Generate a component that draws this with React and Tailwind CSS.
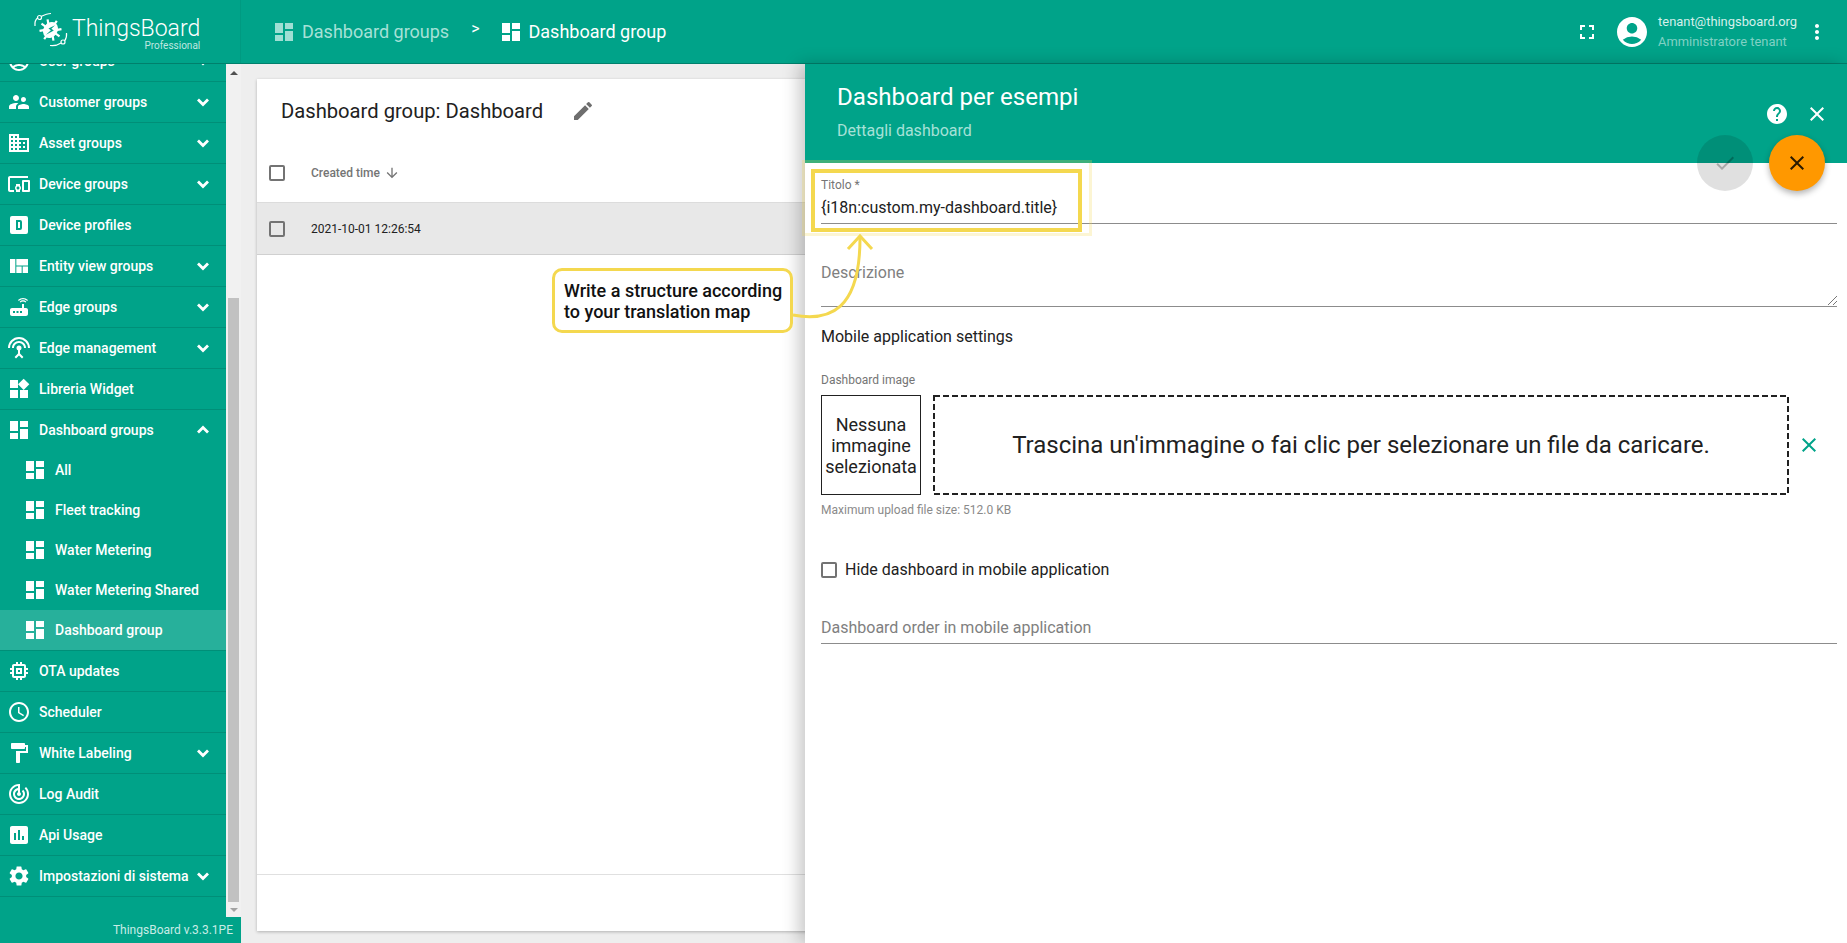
import React from "react";
import {
  MdSupervisorAccount, MdDomain, MdDevicesOther, MdViewQuilt, MdRouter, MdSettingsInputAntenna, MdWidgets,
  MdDashboard, MdMemory, MdSchedule, MdFormatPaint, MdTrackChanges, MdInsertChart, MdSettings,
  MdAccountCircle, MdFullscreen, MdMoreVert, MdHelp, MdClose, MdCheck, MdEdit, MdArrowDownward,
  MdOutlineAccountCircle,
} from "react-icons/md";

const DeviceProfileIcon = ({ className }) => (
  <svg viewBox="0 0 24 24" className={className} fill="currentColor">
    <path fillRule="evenodd" d="M9 7v10h4a2 2 0 0 0 2-2V9a2 2 0 0 0-2-2H9zm2 2h2v6h-2V9zM5 3h14a2 2 0 0 1 2 2v14a2 2 0 0 1-2 2H5a2 2 0 0 1-2-2V5a2 2 0 0 1 2-2z" />
  </svg>
);

const Logo = () => (
  <svg viewBox="0 0 36 36" className="w-[36px] h-[36px] -mt-[3px]" fill="none">
    <g transform="rotate(35 17.5 18)">
      <ellipse cx="17.5" cy="18" rx="7" ry="8.5" fill="white" />
      <path d="M17.5 7v22M9 11l4 4M26 11l-4 4M6.5 18h5M28.5 18h-5M9 25l4-4M26 25l-4-4" stroke="white" strokeWidth="2.2" />
      <path d="M18.5 11.5l-3.5 6.5h3l-1.5 6.5 4-8h-3z" fill="#00a389" />
    </g>
    <path d="M2 14C1.5 10 3 7 5 5.5" stroke="white" strokeWidth="1.2" />
    <path d="M8 4.5c3-1.5 6-3 10-3" stroke="white" strokeWidth="1.2" />
    <circle cx="6.5" cy="5.5" r="2" stroke="white" strokeWidth="1.2" />
    <path d="M33.5 21c.5 3.500-.5 6-2 8" stroke="white" strokeWidth="1.2" />
    <path d="M28 31c-3 2-7 3-11 2.500" stroke="white" strokeWidth="1.2" />
    <circle cx="30" cy="30" r="2" stroke="white" strokeWidth="1.2" />
  </svg>
);

const Chevron = ({ up }) => (
  <svg viewBox="0 0 24 24" className="w-[24px] h-[24px] -mr-[6px] shrink-0" fill="none" stroke="white" strokeWidth="2.8">
    <path d={up ? "M7 14.500l5-5 5 5" : "M7 9.500l5 5 5-5"} />
  </svg>
);

const Row = ({ icon: Icon, label, chevron }) => (
  <div className="flex items-center h-[41px] shrink-0 border-b border-[#008f78] pl-[7px] pr-[17px]">
    <Icon className="w-[24px] h-[24px] shrink-0 text-white" />
    <span className="ml-[8px] flex-1 text-[14px] font-medium text-white whitespace-nowrap">{label}</span>
    {chevron === "down" && <Chevron />}
  </div>
);

const SubRow = ({ label, active }) => (
  <div className={`flex items-center h-[40px] pl-[23px] ${active ? "bg-[#27b09b]" : ""}`}>
    <MdDashboard className="w-[24px] h-[24px] text-white" />
    <span className="ml-[8px] text-[14px] font-medium text-white whitespace-nowrap">{label}</span>
  </div>
);

const Sidebar = () => (
  <aside className="w-[241px] shrink-0 flex flex-col bg-[#00a389]">
    <div className="flex flex-1 min-h-0">
      <nav className="w-[226px] overflow-hidden">
        <div className="-mt-[23px] flex flex-col">
          <Row icon={MdOutlineAccountCircle} label="User groups" chevron="down" />
          <Row icon={MdSupervisorAccount} label="Customer groups" chevron="down" />
          <Row icon={MdDomain} label="Asset groups" chevron="down" />
          <Row icon={MdDevicesOther} label="Device groups" chevron="down" />
          <Row icon={DeviceProfileIcon} label="Device profiles" />
          <Row icon={MdViewQuilt} label="Entity view groups" chevron="down" />
          <Row icon={MdRouter} label="Edge groups" chevron="down" />
          <Row icon={MdSettingsInputAntenna} label="Edge management" chevron="down" />
          <Row icon={MdWidgets} label="Libreria Widget" />
          <div className="flex items-center h-[40px] shrink-0 pl-[7px] pr-[17px]">
            <MdDashboard className="w-[24px] h-[24px] text-white" />
            <span className="ml-[8px] flex-1 text-[14px] font-medium text-white">Dashboard groups</span>
            <Chevron up />
          </div>
          <SubRow label="All" />
          <SubRow label="Fleet tracking" />
          <SubRow label="Water Metering" />
          <SubRow label="Water Metering Shared" />
          <div className="border-b border-[#008f78]"><SubRow label="Dashboard group" active /></div>
          <Row icon={MdMemory} label="OTA updates" />
          <Row icon={MdSchedule} label="Scheduler" />
          <Row icon={MdFormatPaint} label="White Labeling" chevron="down" />
          <Row icon={MdTrackChanges} label="Log Audit" />
          <Row icon={MdInsertChart} label="Api Usage" />
          <Row icon={MdSettings} label="Impostazioni di sistema" chevron="down" />
        </div>
      </nav>
      <div className="w-[15px] bg-[#f1f1f1] flex flex-col items-center">
        <div className="h-[15px] mt-[1px] flex items-center justify-center">
          <div className="w-0 h-0 border-x-[4px] border-x-transparent border-b-[4px] border-b-[#505050]" />
        </div>
        <div className="flex-1 w-full flex flex-col justify-end">
          <div className="h-[604px] mx-[2px] bg-[#c1c1c1]" />
        </div>
        <div className="h-[15px] flex items-center justify-center">
          <div className="w-0 h-0 border-x-[4px] border-x-transparent border-t-[4px] border-t-[#a3a3a3]" />
        </div>
      </div>
    </div>
    <div className="h-[26px] shrink-0 flex items-center justify-end pr-[8px] text-[12px] text-[#c8ece6]">ThingsBoard v.3.3.1PE</div>
  </aside>
);

const TopBar = () => (
  <header className="h-[64px] shrink-0 flex items-center bg-[#00a389] border-b border-[#00806c] text-white">
    <div className="w-[241px] h-full shrink-0 border-r border-[#009a81] flex items-center pl-[33px]">
      <Logo />
      <div className="ml-[3px] flex flex-col items-end mt-[5px]">
        <span className="text-[23px] leading-[24px] font-light">ThingsBoard</span>
        <span className="text-[10px] leading-[10px] text-[#bfe8e1]">Professional</span>
      </div>
    </div>
    <div className="flex items-center ml-[31px]">
      <MdDashboard className="w-[24px] h-[24px] text-[#9fdfd4]" />
      <span className="ml-[6px] text-[18px] text-[#a6e1d7]">Dashboard groups</span>
      <span className="ml-[22px] -mt-[6px] text-[16px] text-white">&gt;</span>
      <MdDashboard className="ml-[19px] w-[24px] h-[24px]" />
      <span className="ml-[6px] text-[18px]">Dashboard group</span>
    </div>
    <div className="ml-auto flex items-center">
      <MdFullscreen className="w-[24px] h-[24px]" />
      <MdAccountCircle className="ml-[15px] w-[36px] h-[36px]" />
      <div className="ml-[8px] flex flex-col -mt-[1px]">
        <span className="text-[12.9px] leading-[20px] text-[#d5f0eb]">tenant@thingsboard.org</span>
        <span className="text-[12.9px] leading-[19px] text-[#80d1c4]">Amministratore tenant</span>
      </div>
      <MdMoreVert className="ml-[8px] mr-[18px] w-[24px] h-[24px]" />
    </div>
  </header>
);

const Checkbox = () => <div className="w-[16px] h-[16px] border-2 border-[#737373] rounded-[2px]" />;

const Card = () => (
  <main className="flex-1 bg-[#eeeeee] pt-[15px] pl-[16px] pb-[12px] min-w-0">
    <div className="bg-white h-full shadow-[0_1px_3px_rgba(0,0,0,0.25)] flex flex-col">
      <div className="h-[64px] flex items-center pl-[24px] text-[20.2px] text-[#212121]">
        Dashboard group: Dashboard
        <MdEdit className="ml-[28px] w-[24px] h-[24px] text-[#6e6e6e]" />
      </div>
      <div className="h-[60px] flex items-center border-b border-[#dcdcdc] pl-[12px]">
        <Checkbox />
        <span className="ml-[26px] text-[12px] font-medium text-[#757575]">Created time</span>
        <MdArrowDownward className="ml-[4px] w-[16px] h-[16px] text-[#757575]" />
      </div>
      <div className="h-[52px] flex items-center bg-[#e8e8e8] border-b border-[#d0d0d0] pl-[12px]">
        <Checkbox />
        <span className="ml-[26px] text-[12px] text-[#212121]">2021-10-01 12:26:54</span>
      </div>
      <div className="flex-1" />
      <div className="h-[57px] border-t border-[#e0e0e0]" />
    </div>
  </main>
);

const Underline = () => <div className="h-px bg-[#8c8c8c]" />;

const Drawer = () => (
  <section className="absolute left-[805px] right-0 top-[64px] bottom-0 bg-white shadow-[-6px_0_16px_rgba(0,0,0,0.22)] flex flex-col">
    <div className="h-[99px] shrink-0 bg-[#00a389] pl-[32px] pt-[17px] text-white relative">
      <div className="text-[24.1px] leading-[32px]">Dashboard per esempi</div>
      <div className="mt-[6px] text-[16px] leading-[24px] text-[#a6e1d7]">Dettagli dashboard</div>
      <MdHelp className="absolute left-[960px] top-[38px] w-[24px] h-[24px]" />
      <MdClose className="absolute left-[1000px] top-[38px] w-[24px] h-[24px]" />
    </div>
    <div className="absolute left-[892px] top-[71px] w-[56px] h-[56px] rounded-full bg-black/12 flex items-center justify-center">
      <MdCheck className="w-[24px] h-[24px] text-black/25" />
    </div>
    <div className="absolute left-[964px] top-[71px] w-[56px] h-[56px] rounded-full bg-[#ff9800] flex items-center justify-center shadow-[0_3px_6px_rgba(0,0,0,0.3)]">
      <MdClose className="w-[24px] h-[24px] text-[#2a1a00]" />
    </div>
    <div className="pl-[16px] pr-[10px] flex flex-col">
      <div className="mt-[15px] text-[12px] leading-[14px] text-[#757575]">Titolo *</div>
      <div className="mt-[6px] text-[16px] leading-[20px] text-[#212121]">{"{i18n:custom.my-dashboard.title}"}</div>
      <div className="mt-[5px]"><Underline /></div>
      <div className="mt-[39px] text-[16px] leading-[20px] text-[#808080]">Descrizione</div>
      <div className="h-[23px] relative">
        <svg viewBox="0 0 10 10" className="absolute right-0 bottom-[1px] w-[10px] h-[10px]" stroke="#777" strokeWidth="1">
          <path d="M1 10L10 1M6 10l4-4" />
        </svg>
      </div>
      <Underline />
      <div className="mt-[20px] text-[16px] leading-[20px] text-[#212121]">Mobile application settings</div>
      <div className="mt-[25px] text-[12px] leading-[16px] text-[#757575]">Dashboard image</div>
      <div className="mt-[7px] flex items-center">
        <div className="w-[100px] h-[100px] shrink-0 border border-[#212121] flex items-center justify-center text-center text-[18px] leading-[21px] text-[#212121]">
          Nessuna immagine selezionata
        </div>
        <div className="ml-[12px] w-[856px] h-[100px] relative flex items-center justify-center text-[24px] text-[#212121]">
          <svg className="absolute inset-0 w-full h-full" fill="none">
            <rect x="1" y="1" width="854" height="98" stroke="#212121" strokeWidth="2" strokeDasharray="6 3" />
          </svg>
          Trascina un'immagine o fai clic per selezionare un file da caricare.
        </div>
        <MdClose className="ml-[8px] w-[24px] h-[24px] text-[#00a389]" />
      </div>
      <div className="mt-[7px] text-[12px] leading-[16px] text-[#8a8a8a]">Maximum upload file size: 512.0 KB</div>
      <div className="mt-[40px] flex items-center">
        <Checkbox />
        <span className="ml-[8px] text-[16px] leading-[24px] text-[#212121]">Hide dashboard in mobile application</span>
      </div>
      <div className="mt-[36px] text-[16px] leading-[20px] text-[#808080]">Dashboard order in mobile application</div>
      <div className="mt-[5px]"><Underline /></div>
    </div>
  </section>
);

const Annotations = () => (
  <>
    <div className="absolute left-[802px] top-[160px] w-[290px] h-[76px] border-[3px] border-[#f4d84f]/25 pointer-events-none" />
    <div className="absolute left-[811px] top-[169px] w-[271px] h-[63px] border-[4px] border-[#f4d84f] pointer-events-none" />
    <svg className="absolute left-[780px] top-[230px] w-[110px] h-[110px] pointer-events-none" viewBox="0 0 110 110" fill="none" stroke="#f4d84f" strokeWidth="3">
      <path d="M13 85C50 92 80 80 80 8" />
      <path d="M68 19L80 6L92 19" />
    </svg>
    <div className="absolute left-[552px] top-[268px] w-[241px] h-[65px] rounded-[10px] border-[3px] border-[#f4d84f] bg-white pl-[9px] pt-[9px] text-[18px] leading-[21px] font-medium text-[#111] whitespace-nowrap">
      Write a structure according<br />to your translation map
    </div>
  </>
);

export default function App() {
  return (
    <div className="relative h-screen w-full overflow-hidden flex flex-col font-['Roboto',sans-serif]">
      <TopBar />
      <div className="flex flex-1 min-h-0">
        <Sidebar />
        <Card />
      </div>
      <Drawer />
      <Annotations />
    </div>
  );
}
